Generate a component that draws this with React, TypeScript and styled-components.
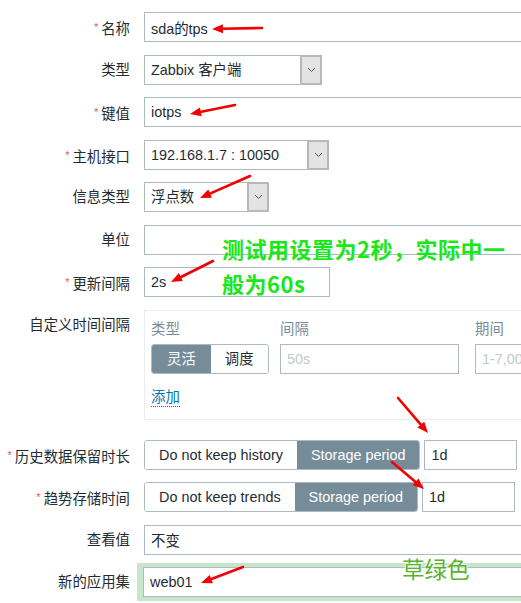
import React from "react";
import styled, { createGlobalStyle } from "styled-components";

const GlobalStyle = createGlobalStyle`
  html, body {
    margin: 0;
    padding: 0;
    background: #ffffff;
    overflow: hidden;
  }
  body {
    font-family: "Liberation Sans", Arial, "Noto Sans CJK SC", sans-serif;
    font-size: 14.4px;
    color: #1f2c33;
  }
`;

const Page = styled.div`
  position: relative;
  width: 521px;
  height: 603px;
  overflow: hidden;
`;

const Form = styled.div`
  display: flex;
  flex-direction: column;
  gap: 12.5px;
  padding-top: 12px;
`;

const Row = styled.div<{ $after?: number; $before?: number }>`
  display: flex;
  align-items: flex-start;
  margin-bottom: ${(p) => p.$after ?? 0}px;
  margin-top: ${(p) => p.$before ?? 0}px;
`;

const Label = styled.div<{ $pad?: number }>`
  flex: none;
  width: 130px;
  margin-right: 14px;
  height: 30px;
  line-height: 30px;
  margin-top: ${(p) => p.$pad ?? 0}px;
  text-align: right;
  white-space: nowrap;
  color: #1f2c33;
`;

const Req = styled.span`
  color: #e45959;
  font-size: 11px;
  vertical-align: 3px;
  margin-right: 3px;
`;

const TextInput = styled.input<{ $w?: number }>`
  flex: none;
  box-sizing: border-box;
  width: ${(p) => (p.$w ? `${p.$w}px` : "460px")};
  height: 30px;
  margin: 0;
  padding: 0 6px;
  border: 1px solid #acbbc2;
  border-radius: 0;
  background: #ffffff;
  font: inherit;
  color: #1f2c33;
  outline: none;
  &::placeholder {
    color: #bfc9ce;
  }
`;

const Select = styled.div<{ $w: number }>`
  flex: none;
  box-sizing: border-box;
  width: ${(p) => p.$w}px;
  height: 30px;
  display: flex;
  align-items: stretch;
  border: 1px solid #acbbc2;
  background: #ffffff;
`;

const SelectText = styled.span`
  flex: 1;
  padding: 0 6px;
  line-height: 28px;
  white-space: nowrap;
  overflow: hidden;
`;

const SelectButton = styled.span`
  flex: none;
  box-sizing: border-box;
  width: 22px;
  margin: -1px -1px -1px 0;
  border: 2px solid #b4b9bc;
  background: #e3e3e3;
  display: flex;
  align-items: center;
  justify-content: center;
`;

const Segmented = styled.div`
  flex: none;
  display: inline-flex;
  box-sizing: border-box;
  height: 30px;
  border: 1px solid #acbbc2;
  border-radius: 3px;
  overflow: hidden;
  background: #ffffff;
`;

const SegButton = styled.span<{ $active?: boolean; $pad: number }>`
  padding: 0 ${(p) => p.$pad}px;
  line-height: 28px;
  white-space: nowrap;
  background: ${(p) => (p.$active ? "#768d99" : "#ffffff")};
  color: ${(p) => (p.$active ? "#ffffff" : "#1f2c33")};
`;

const PeriodGroup = styled.div`
  display: flex;
  gap: 4px;
`;

const IntervalBox = styled.div`
  flex: none;
  box-sizing: border-box;
  width: 420px;
  height: 110px;
  border: 1px solid #ebeef0;
  padding: 8px 6px 0;
`;

const IntervalGrid = styled.div`
  display: grid;
  grid-template-columns: 129px 195px 1fr;
  row-gap: 5px;
`;

const ColHead = styled.div`
  color: #768d99;
  line-height: 20px;
  white-space: nowrap;
`;

const AddLink = styled.span`
  display: inline-block;
  margin-top: 14px;
  color: #0275b8;
  line-height: 18px;
  border-bottom: 1px dotted #0275b8;
`;

const Highlight = styled.div`
  flex: none;
  margin-left: -7px;
  margin-top: -4px;
  padding: 4px 0 4px 6px;
  background: #c6e6ca;
`;

const Overlay = styled.svg`
  position: absolute;
  left: 0;
  top: 0;
  pointer-events: none;
`;

const NoteGreen = styled.div`
  position: absolute;
  left: 222px;
  top: 231px;
  width: 296px;
  font-family: "Noto Sans CJK SC", "Liberation Sans", sans-serif;
  font-weight: 700;
  font-size: 22px;
  line-height: 35px;
  letter-spacing: 0.5px;
  color: #18e818;
  white-space: nowrap;
`;

const NoteGrass = styled.div`
  position: absolute;
  left: 402px;
  top: 555px;
  font-family: "Noto Sans CJK SC", "Liberation Sans", sans-serif;
  font-size: 22.5px;
  line-height: 26px;
  color: #5ab22a;
  text-shadow: 0 0 2px #fff, 0 0 2px #fff, 0 0 3px #fff;
`;

const Chevron = () => (
  <svg width="9" height="6" viewBox="0 0 9 6">
    <polyline points="1,1 4.5,4.5 8,1" fill="none" stroke="#555" strokeWidth="1" />
  </svg>
);

type ArrowProps = { x1: number; y1: number; x2: number; y2: number };

const Arrow = ({ x1, y1, x2, y2 }: ArrowProps) => {
  const dx = x2 - x1;
  const dy = y2 - y1;
  const len = Math.hypot(dx, dy);
  const ux = dx / len;
  const uy = dy / len;
  const hl = 11;
  const hw = 4.5;
  const bx = x2 - ux * hl;
  const by = y2 - uy * hl;
  const px = -uy;
  const py = ux;
  return (
    <g>
      <line x1={x1} y1={y1} x2={bx + ux * 2} y2={by + uy * 2} stroke="#f20000" strokeWidth={2.6} strokeLinecap="round" />
      <polygon
        points={`${x2},${y2} ${bx + px * hw},${by + py * hw} ${bx - px * hw},${by - py * hw}`}
        fill="#f20000"
      />
    </g>
  );
};

const arrows: ArrowProps[] = [
  { x1: 262, y1: 28, x2: 212, y2: 29 },
  { x1: 235, y1: 105, x2: 190, y2: 114 },
  { x1: 250, y1: 176, x2: 200, y2: 198 },
  { x1: 213, y1: 261, x2: 171, y2: 282 },
  { x1: 398, y1: 398, x2: 428, y2: 433 },
  { x1: 392, y1: 462, x2: 424, y2: 489 },
  { x1: 243, y1: 567, x2: 201, y2: 583 },
];

export default function App() {
  return (
    <Page>
      <GlobalStyle />
      <Form>
        <Row>
          <Label>
            <Req>*</Req>名称
          </Label>
          <TextInput readOnly defaultValue="sda的tps" />
        </Row>
        <Row>
          <Label>类型</Label>
          <Select $w={178}>
            <SelectText>Zabbix 客户端</SelectText>
            <SelectButton>
              <Chevron />
            </SelectButton>
          </Select>
        </Row>
        <Row>
          <Label>
            <Req>*</Req>键值
          </Label>
          <TextInput readOnly defaultValue="iotps" />
        </Row>
        <Row>
          <Label>
            <Req>*</Req>主机接口
          </Label>
          <Select $w={185}>
            <SelectText>192.168.1.7 : 10050</SelectText>
            <SelectButton>
              <Chevron />
            </SelectButton>
          </Select>
        </Row>
        <Row>
          <Label>信息类型</Label>
          <Select $w={125}>
            <SelectText>浮点数</SelectText>
            <SelectButton>
              <Chevron />
            </SelectButton>
          </Select>
        </Row>
        <Row>
          <Label>单位</Label>
          <TextInput readOnly defaultValue="" />
        </Row>
        <Row>
          <Label>
            <Req>*</Req>更新间隔
          </Label>
          <TextInput $w={186} readOnly defaultValue="2s" />
        </Row>
        <Row $after={7.5}>
          <Label>自定义时间间隔</Label>
          <IntervalBox>
            <IntervalGrid>
              <ColHead>类型</ColHead>
              <ColHead>间隔</ColHead>
              <ColHead>期间</ColHead>
              <div>
                <Segmented>
                  <SegButton $active $pad={15}>
                    灵活
                  </SegButton>
                  <SegButton $pad={14}>调度</SegButton>
                </Segmented>
              </div>
              <div>
                <TextInput $w={179} readOnly placeholder="50s" />
              </div>
              <div>
                <TextInput $w={120} readOnly placeholder="1-7,00:00-24:00" />
              </div>
            </IntervalGrid>
            <AddLink>添加</AddLink>
          </IntervalBox>
        </Row>
        <Row>
          <Label>
            <Req>*</Req>历史数据保留时长
          </Label>
          <PeriodGroup>
            <Segmented>
              <SegButton $pad={14}>Do not keep history</SegButton>
              <SegButton $active $pad={14}>
                Storage period
              </SegButton>
            </Segmented>
            <TextInput $w={93} readOnly defaultValue="1d" />
          </PeriodGroup>
        </Row>
        <Row>
          <Label>
            <Req>*</Req>趋势存储时间
          </Label>
          <PeriodGroup>
            <Segmented>
              <SegButton $pad={14}>Do not keep trends</SegButton>
              <SegButton $active $pad={14}>
                Storage period
              </SegButton>
            </Segmented>
            <TextInput $w={93} readOnly defaultValue="1d" />
          </PeriodGroup>
        </Row>
        <Row>
          <Label>查看值</Label>
          <TextInput readOnly defaultValue="不变" />
        </Row>
        <Row>
          <Label>新的应用集</Label>
          <Highlight>
            <TextInput readOnly defaultValue="web01" />
          </Highlight>
        </Row>
      </Form>

      <NoteGreen>
        测试用设置为2秒，实际中一
        <br />
        般为60s
      </NoteGreen>
      <NoteGrass>草绿色</NoteGrass>

      <Overlay width="521" height="603" viewBox="0 0 521 603">
        {arrows.map((a, i) => (
          <Arrow key={i} {...a} />
        ))}
      </Overlay>
    </Page>
  );
}
